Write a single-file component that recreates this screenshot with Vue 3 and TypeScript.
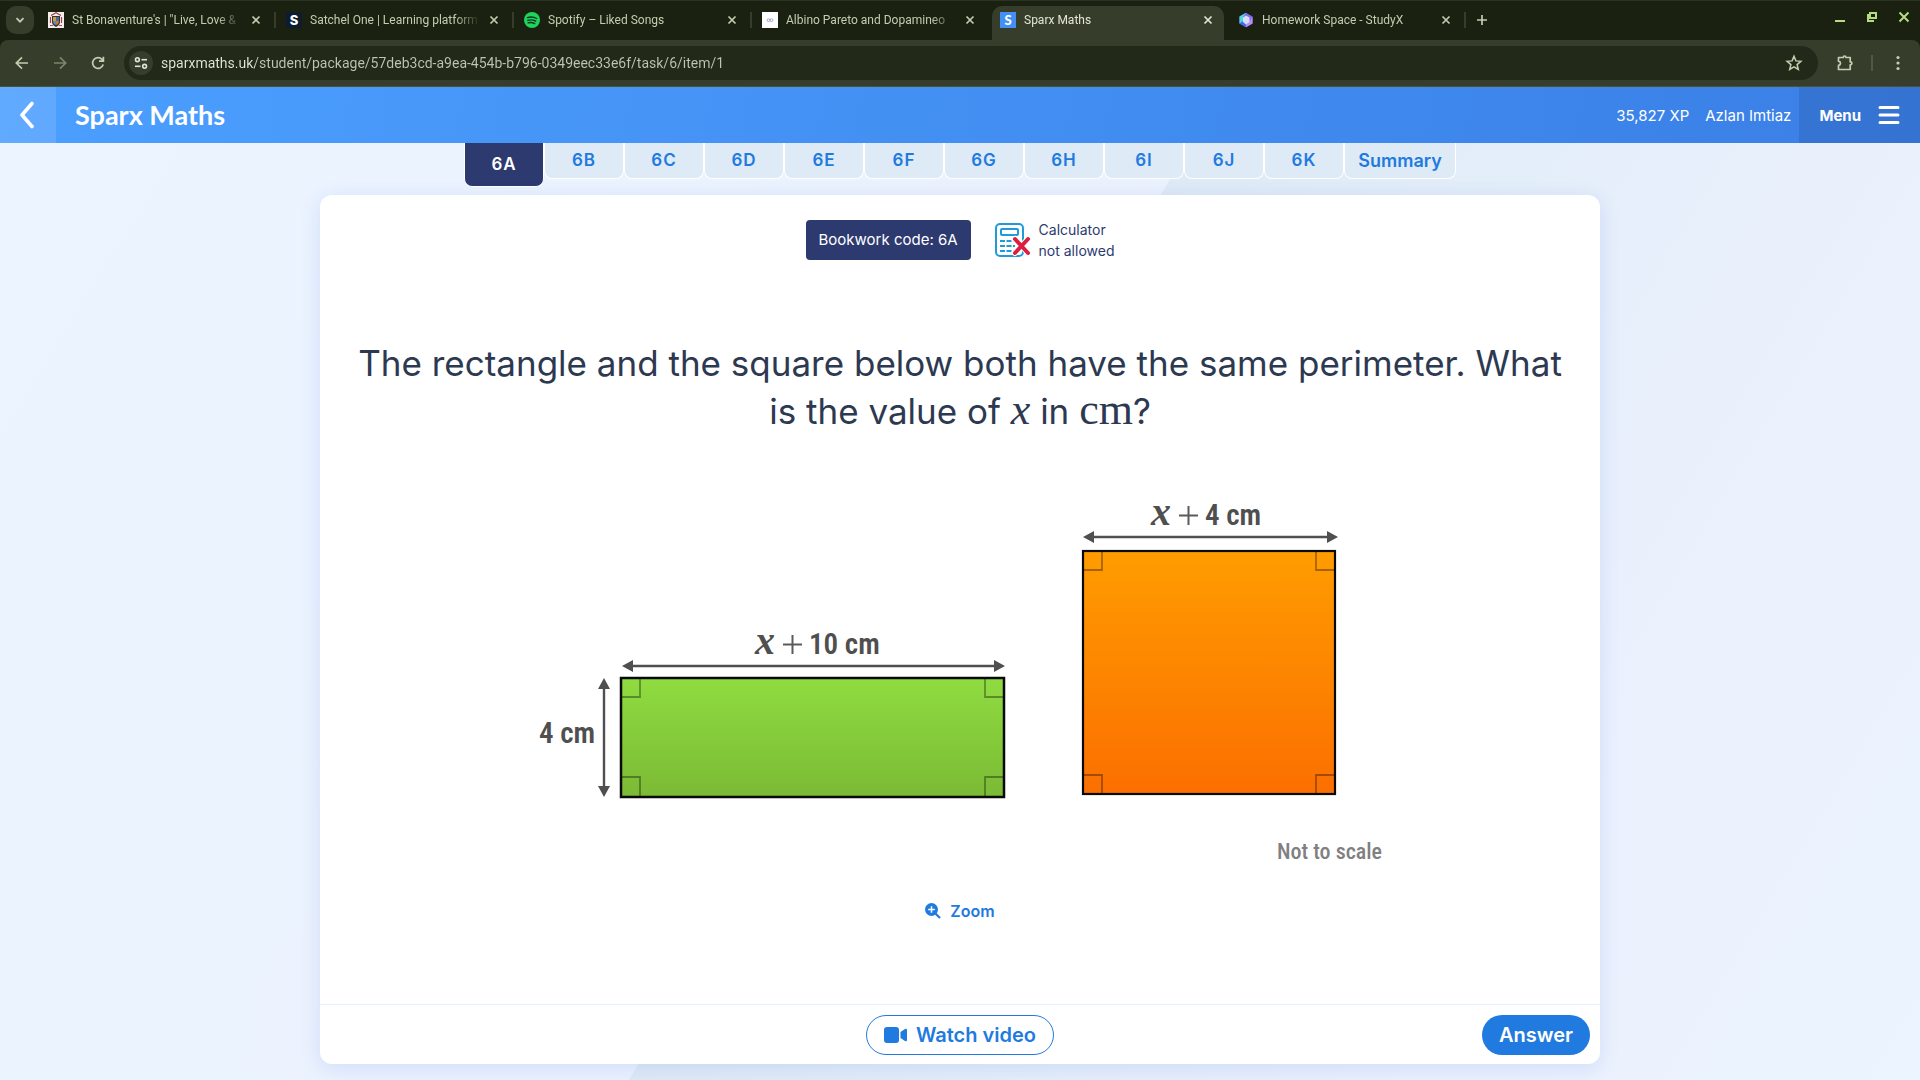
<script setup lang="ts">
interface BrowserTab {
  title: string
  icon: string
  active?: boolean
}

const browserTabs: BrowserTab[] = [
  { title: 'St Bonaventure\'s | "Live, Love &', icon: 'crest' },
  { title: 'Satchel One | Learning platform', icon: 'satchel' },
  { title: 'Spotify – Liked Songs', icon: 'spotify' },
  { title: 'Albino Pareto and Dopamineo', icon: 'page' },
  { title: 'Sparx Maths', icon: 'sparx', active: true },
  { title: 'Homework Space - StudyX', icon: 'studyx' },
]

const url = 'sparxmaths.uk/student/package/57deb3cd-a9ea-454b-b796-0349eec33e6f/task/6/item/1'

const taskItems = ['6A', '6B', '6C', '6D', '6E', '6F', '6G', '6H', '6I', '6J', '6K']
</script>

<template>
  <div class="window">
    <header class="chrome">
      <div class="tabstrip">
        <button class="tab-search" aria-label="Search tabs">
          <svg width="10" height="10" viewBox="0 0 10 10"><path d="M1.5 3.2 5 6.7l3.5-3.5" fill="none" stroke="currentColor" stroke-width="1.8" /></svg>
        </button>
        <div class="tabs">
          <div v-for="tab in browserTabs" :key="tab.title" class="tab" :class="{ active: tab.active }">
            <svg v-if="tab.icon === 'crest'" class="favicon" viewBox="0 0 16 16">
              <rect width="16" height="16" fill="#f4efec" />
              <path d="M3 3.5 8 .8l5 2.7M2.5 5v6M13.500 5v6" fill="none" stroke="#a33f45" stroke-width="1.200" />
              <path d="M4 4h8v6q0 3-4 5-4-2-4-5z" fill="#3c3434" />
              <path d="M5 5h3v4H5z" fill="#c8a13c" />
              <path d="M8 5h3v4H8z" fill="#4669a8" />
              <path d="M5 9h3v4Q5 12 5 9z" fill="#5c8bc0" />
              <path d="M8 9h3q0 3-3 4z" fill="#c87832" />
              <path d="M2 13.500h3M11 13.500h3" stroke="#b54a4a" />
            </svg>
            <svg v-else-if="tab.icon === 'satchel'" class="favicon" viewBox="0 0 16 16">
              <rect width="16" height="16" rx="3" fill="#0d1b33" />
              <text x="8" y="12.500" text-anchor="middle" font-family="Inter, sans-serif" font-weight="800" font-size="13" fill="#fff">S</text>
            </svg>
            <svg v-else-if="tab.icon === 'spotify'" class="favicon" viewBox="0 0 16 16">
              <circle cx="8" cy="8" r="8" fill="#1ed35e" />
              <path d="M3.400 5.600q5-1.400 9.300.9M3.800 8.300q4.200-1.200 7.900.9M4.200 10.800q3.500-.9 6.500.8" fill="none" stroke="#12351c" stroke-width="1.400" stroke-linecap="round" />
            </svg>
            <svg v-else-if="tab.icon === 'page'" class="favicon" viewBox="0 0 16 16">
              <rect width="16" height="16" fill="#fff" />
              <circle cx="6.500" cy="8.200" r="1.400" fill="none" stroke="#8d93b8" stroke-width=".8" />
              <circle cx="9.500" cy="8.200" r="1.400" fill="none" stroke="#8d93b8" stroke-width=".8" />
            </svg>
            <svg v-else-if="tab.icon === 'sparx'" class="favicon" viewBox="0 0 16 16">
              <rect width="16" height="16" fill="#4390f4" />
              <text x="8" y="12.500" text-anchor="middle" font-family="Lato, sans-serif" font-weight="900" font-size="13" fill="#fff">S</text>
            </svg>
            <svg v-else class="favicon" viewBox="0 0 16 16">
              <path d="M8 .8 14.500 4.400v7.200L8 15.200 1.500 11.600V4.400z" fill="#7c6cf0" />
              <path d="M8 .8 1.500 4.400v7.200L5 10V5z" fill="#4fd8d8" />
              <path d="M1.500 11.600 8 15.200V11L5 9z" fill="#3a6cf0" />
              <path d="M14.500 4.400v7.200L8 15.200V12l4-3z" fill="#b98cf5" />
              <path d="M5 5.500 8 3.500l3.500 2V10L8 12.500 5 10z" fill="#d9dcfb" />
            </svg>
            <span class="tab-title">{{ tab.title }}</span>
            <button class="tab-close" aria-label="Close tab">
              <svg width="10" height="10" viewBox="0 0 10 10"><path d="m1.500 1.500 7 7m0-7-7 7" stroke="currentColor" stroke-width="1.700" /></svg>
            </button>
          </div>
        </div>
        <button class="new-tab" aria-label="New tab">
          <svg width="12" height="12" viewBox="0 0 12 12"><path d="M6 1v10M1 6h10" stroke="currentColor" stroke-width="1.700" /></svg>
        </button>
        <div class="window-controls">
          <button aria-label="Minimise">
            <svg width="12" height="12" viewBox="0 0 12 12"><path d="M1 10h10" stroke="currentColor" stroke-width="2" /></svg>
          </button>
          <button aria-label="Restore">
            <svg width="12" height="12" viewBox="0 0 12 12"><path d="M4 2h6v5H4zM2 3v7h6" fill="none" stroke="currentColor" stroke-width="2" /></svg>
          </button>
          <button aria-label="Close">
            <svg width="12" height="12" viewBox="0 0 12 12"><path d="m1.500 1.500 9 9m0-9-9 9" stroke="currentColor" stroke-width="2" /></svg>
          </button>
        </div>
      </div>

      <div class="toolbar">
        <button class="nav-btn" aria-label="Back">
          <svg width="16" height="16" viewBox="0 0 16 16"><path d="M14 8H2.500M8 2.300 2.300 8 8 13.700" fill="none" stroke="currentColor" stroke-width="1.700" /></svg>
        </button>
        <button class="nav-btn dim" aria-label="Forward">
          <svg width="16" height="16" viewBox="0 0 16 16"><path d="M2 8h11.500M8 2.300 13.700 8 8 13.700" fill="none" stroke="currentColor" stroke-width="1.700" /></svg>
        </button>
        <button class="nav-btn" aria-label="Reload">
          <svg width="16" height="16" viewBox="0 0 16 16"><path d="M13.200 9.500A5.400 5.400 0 1 1 12 4.300l1.200 1.300M13.400 1.800v4.400H9" fill="none" stroke="currentColor" stroke-width="1.700" /></svg>
        </button>
        <div class="omnibox">
          <button class="site-info" aria-label="View site information">
            <svg width="14" height="14" viewBox="0 0 14 14" fill="none" stroke="currentColor" stroke-width="1.600">
              <circle cx="3.400" cy="3.700" r="1.900" /><path d="M7.500 3.700H13" /><circle cx="10.600" cy="10.300" r="1.900" /><path d="M1 10.300h5.500" />
            </svg>
          </button>
          <input class="url" type="text" aria-label="Address" :value="url" />
          <button class="star" aria-label="Bookmark this page">
            <svg width="18" height="18" viewBox="0 0 18 18"><path d="m9 2.200 1.900 4.700 5 .4-3.800 3.300 1.200 4.900L9 12.800l-4.300 2.700 1.200-4.900L2.100 7.300l5-.4z" fill="none" stroke="currentColor" stroke-width="1.500" /></svg>
          </button>
        </div>
        <button class="nav-btn puzzle" aria-label="Extensions">
          <svg width="18" height="18" viewBox="0 0 18 18"><path d="M1.500 3.500h4.800q0-1.500 1.300-1.500t1.300 1.500h4.300v4.300q1.700 0 1.700 1.500t-1.700 1.500v4.700H1.500v-4.100q2-.4 2-2.100t-2-2.100z" fill="none" stroke="currentColor" stroke-width="1.700" stroke-linejoin="round" /></svg>
        </button>
        <span class="divider"></span>
        <button class="nav-btn kebab" aria-label="Browser menu">
          <svg width="16" height="16" viewBox="0 0 16 16" fill="currentColor"><circle cx="8" cy="2.500" r="1.600" /><circle cx="8" cy="8" r="1.600" /><circle cx="8" cy="13.500" r="1.600" /></svg>
        </button>
      </div>
    </header>

    <nav class="app-bar">
      <button class="back" aria-label="Back to tasks">
        <svg width="18" height="28" viewBox="0 0 18 28"><path d="M13 2.500 3 14l10 11.500" fill="none" stroke="#fff" stroke-width="3.600" stroke-linecap="round" stroke-linejoin="round" /></svg>
      </button>
      <a class="brand" href="#">Sparx Maths</a>
      <span class="xp">35,827 XP</span>
      <span class="user">Azlan Imtiaz</span>
      <button class="menu">
        Menu
        <svg width="22" height="20" viewBox="0 0 22 20"><path d="M2 2.500h18M2 10h18M2 17.500h18" stroke="#fff" stroke-width="3" stroke-linecap="round" /></svg>
      </button>
    </nav>

    <main class="page">
      <div class="task-tabs">
        <button v-for="(item, i) in taskItems" :key="item" class="task-tab" :class="{ current: i === 0 }">{{ item }}</button>
        <button class="task-tab summary">Summary</button>
      </div>

      <section class="card">
        <div class="info-row">
          <div class="bookwork">Bookwork code: 6A</div>
          <div class="calculator">
            <svg width="36" height="36" viewBox="0 0 36 36" fill="none">
              <rect x="1" y="2" width="27" height="32" rx="4" stroke="#1f9bd7" stroke-width="2" />
              <rect x="6" y="7" width="17" height="6" rx="1" stroke="#1f9bd7" stroke-width="2" />
              <path d="M5 19h18M5 24h15M5 29h18" stroke="#1f9bd7" stroke-width="2" stroke-dasharray="5 1.500" />
              <path d="m20 17 13 14M33 17 20 31" stroke="#fff" stroke-width="6" stroke-linecap="round" />
              <path d="m20 17 13 14M33 17 20 31" stroke="#dc1f3e" stroke-width="4" stroke-linecap="round" />
            </svg>
            <p>Calculator<br />not allowed</p>
          </div>
        </div>

        <h1 class="question">
          The rectangle and the square below both have the same perimeter. What is the value of
          <i class="math">x</i> in <span class="math">cm</span>?
        </h1>

        <svg class="figure" viewBox="0 0 880 384" role="img" aria-label="Rectangle and square with side lengths">
          <defs>
            <linearGradient id="green" x1="0" y1="0" x2="0" y2="1">
              <stop offset="0" stop-color="#8fdc40" />
              <stop offset="1" stop-color="#7bba35" />
            </linearGradient>
            <linearGradient id="orange" x1="0" y1="0" x2="0" y2="1">
              <stop offset="0" stop-color="#ff9c00" />
              <stop offset="1" stop-color="#fb6f00" />
            </linearGradient>
          </defs>

          <rect x="101" y="188" width="383" height="119" fill="url(#green)" stroke="#0a0a0a" stroke-width="2.500" />
          <path d="M102 207h18v-18M483 207h-18v-18M102 287h18v19M483 287h-18v19" fill="none" stroke="#000" stroke-opacity=".35" stroke-width="1.800" />
          <path d="M110 176h366M84 197v101" stroke="#4f4f4f" stroke-width="2.400" />
          <path d="m102 176 11-6v12zM485 176l-11-6v12zM84 188l-6 11h12zM84 307l-6-11h12z" fill="#4f4f4f" />

          <rect x="563" y="61" width="252" height="243" fill="url(#orange)" stroke="#0a0a0a" stroke-width="2.200" />
          <path d="M564 80h18V62M814 80h-18V62M564 285h18v18M814 285h-18v18" fill="none" stroke="#000" stroke-opacity=".35" stroke-width="1.800" />
          <path d="M570 47h240" stroke="#4f4f4f" stroke-width="2.400" />
          <path d="m563 47 11-6v12zM818 47l-11-6v12z" fill="#4f4f4f" />

          <g class="labels">
            <text class="var" x="235" y="164">x</text>
            <path d="M263 154.500h19M272.500 145v19" />
            <text x="289" y="164">10 cm</text>
            <text x="19" y="253">4 cm</text>
            <text class="var" x="631" y="35">x</text>
            <path d="M659 25.500h19M668.500 16v19" />
            <text x="685" y="35">4 cm</text>
            <text class="scale" x="757" y="369">Not to scale</text>
          </g>
        </svg>

        <button class="zoom">
          <svg width="16" height="16" viewBox="0 0 16 16"><circle cx="6.500" cy="6.500" r="6.500" fill="currentColor" /><path d="m10.500 10.500 4.500 4.500" stroke="currentColor" stroke-width="2.200" /><path d="M6.500 3.200v6.600M3.200 6.500h6.600" stroke="#fff" stroke-width="1.500" /></svg>
          Zoom
        </button>

        <footer class="actions">
          <button class="watch">
            <svg width="23" height="16" viewBox="0 0 23 16" fill="currentColor"><rect width="15" height="16" rx="3" /><path d="M16.500 5 21 2q2-1 2 1v10q0 2-2 1l-4.500-3z" /></svg>
            Watch video
          </button>
          <button class="answer">Answer</button>
        </footer>
      </section>
    </main>
  </div>
</template>

<style>
body {
  margin: 0;
}
</style>

<style scoped>
.window {
  display: flex;
  flex-direction: column;
  min-height: 100vh;
  font-family: Inter, "Open Sans", sans-serif;
  color: #2d3950;
}

button {
  display: flex;
  align-items: center;
  justify-content: center;
  margin: 0;
  padding: 0;
  border: 0;
  background: none;
  color: inherit;
  font: inherit;
  cursor: pointer;
}

.chrome {
  font-family: Roboto, sans-serif;
  background: #1a2110;
  color: #c3cdb0;
}

.tabstrip {
  display: flex;
  height: 40px;
  box-sizing: border-box;
  border-top: 1px solid #2b3323;
}

.tab-search {
  width: 28px;
  height: 28px;
  margin: 5px 6px 0;
  border-radius: 10px;
  background: #363e2b;
}

.tabs {
  display: flex;
}

.tab {
  position: relative;
  display: flex;
  align-items: center;
  width: 238px;
  height: 34px;
  margin-top: 5px;
  padding: 0 14px 6px 8px;
  box-sizing: border-box;
  font-size: 12px;
}

.tab::after {
  content: "";
  position: absolute;
  right: 2px;
  top: 6px;
  width: 2px;
  height: 16px;
  background: #363e2b;
}

.tab.active::after,
.tab:has(+ .active)::after {
  content: none;
}

.tab.active {
  color: #e1e6d4;
}

.tab.active::before {
  content: "";
  position: absolute;
  inset: 0 6px 0 0;
  border-radius: 10px 10px 0 0;
  background: #363e2b;
}

.favicon {
  position: relative;
  flex: none;
  width: 16px;
  height: 16px;
}

.tab-title {
  position: relative;
  flex: 1;
  min-width: 0;
  margin: 0 8px;
  overflow: hidden;
  white-space: nowrap;
  mask-image: linear-gradient(90deg, #000 145px, transparent 170px);
}

.tab-close {
  position: relative;
  width: 16px;
  height: 16px;
}

.new-tab {
  width: 28px;
  height: 28px;
  margin: 5px 0 0;
}

.window-controls {
  display: flex;
  gap: 20px;
  height: 32px;
  margin-left: auto;
  padding-right: 10px;
  color: #b5dc83;
}

.toolbar {
  display: flex;
  align-items: center;
  height: 47px;
  box-sizing: border-box;
  padding: 0 8px 1px;
  border-bottom: 1px solid #4a5238;
  border-radius: 8px 8px 0 0;
  background: #363e2b;
}

.nav-btn {
  flex: none;
  width: 28px;
  height: 28px;
  margin-right: 10px;
}

.dim {
  color: #7b856b;
}

.omnibox {
  display: flex;
  flex: 1;
  align-items: center;
  height: 34px;
  margin-left: 2px;
  padding: 0 15px 0 5px;
  box-sizing: border-box;
  border-radius: 17px;
  background: #222918;
}

.site-info {
  flex: none;
  width: 24px;
  height: 24px;
  border-radius: 12px;
  background: #363e2b;
  color: #dfe5d2;
}

.url {
  flex: 1;
  min-width: 0;
  padding: 0;
  margin-left: 8px;
  border: 0;
  outline: 0;
  font: 14px/24px Roboto, sans-serif;
  color: transparent;
  background: linear-gradient(90deg, #e4e8da 94px, #bfc5b2 94px) text;
}

.puzzle {
  margin: 0 0 0 14px;
}

.divider {
  width: 2px;
  height: 16px;
  margin: 0 11px;
  background: #505a41;
}

.kebab {
  margin: 0;
}

.app-bar {
  display: flex;
  align-items: center;
  height: 56px;
  background: linear-gradient(100deg, #4b9fff, #3a7fe6);
  color: #fff;
  font-size: 15px;
}

.back {
  width: 56px;
  height: 56px;
  background: rgb(255 255 255 / 12%);
}

.brand {
  margin-left: 19px;
  margin-right: auto;
  font: 700 27px/36px Lato, sans-serif;
  color: #fff;
  text-decoration: none;
}

.xp {
  margin-right: 16px;
}

.user {
  margin-right: 8px;
}

.menu {
  gap: 17px;
  height: 56px;
  padding: 0 20px;
  background: rgb(35 75 140 / 22%);
  font-weight: 700;
}

.page {
  display: flex;
  flex: 1;
  flex-direction: column;
  align-items: center;
  padding: 0 24px 16px;
  background: linear-gradient(121deg, #ebf4ff 0%, #ebf2fe 48%, #deeaf6 48%, #e4eefa 62%, #ebf1fd 80%, #ebf4ff 100%);
}

.task-tabs {
  display: flex;
  align-items: flex-start;
  height: 52px;
}

.task-tab {
  width: 80px;
  height: 36px;
  padding-bottom: 1px;
  box-sizing: border-box;
  border: 1px solid #fff;
  border-top: 0;
  border-radius: 0 0 8px 8px;
  background: #deeaf6;
  color: #217adf;
  font-size: 17px;
  font-weight: 600;
  letter-spacing: 1px;
}

.task-tab.current {
  height: 44px;
  background: #2d3a70;
  color: #fff;
}

.task-tab.summary {
  width: 112px;
  font-size: 18px;
  letter-spacing: 0;
}

.card {
  display: flex;
  flex: 1;
  flex-direction: column;
  align-items: center;
  width: 100%;
  max-width: 1280px;
  border-radius: 12px;
  background: #fff;
  box-shadow: 0 4px 20px rgb(50 90 210 / 14%);
}

.info-row {
  display: flex;
  align-items: center;
  gap: 24px;
  margin-top: 24px;
}

.bookwork {
  padding: 0 13px;
  border-radius: 4px;
  background: #2d3a70;
  color: #fff;
  font-size: 15px;
  line-height: 40px;
}

.calculator {
  display: flex;
  align-items: center;
  gap: 8px;
  color: #2d3a70;
  font-size: 14px;
  line-height: 21px;
}

.calculator p {
  margin: 0;
}

.question {
  max-width: 1232px;
  margin: 78px 24px 0;
  font-size: 35px;
  font-weight: 400;
  line-height: 48px;
  text-align: center;
}

.math {
  font-family: "Liberation Serif", serif;
  font-size: 44px;
  line-height: 40px;
}

.figure {
  width: 100%;
  max-width: 880px;
  margin-top: 55px;
}

.labels {
  fill: #4f4f4f;
  font: 600 29px "Roboto Condensed", sans-serif;
}

.labels path {
  fill: none;
  stroke: #5a5a5a;
  stroke-width: 2;
}

.labels .var {
  font: italic 700 40px "Liberation Serif", serif;
}

.labels .scale {
  fill: #808080;
  font-size: 22px;
  font-weight: 500;
}

.zoom {
  gap: 9px;
  height: 40px;
  margin-top: 17px;
  color: #217adf;
  font-size: 16px;
  font-weight: 600;
}

.actions {
  display: grid;
  grid-template-columns: 1fr auto 1fr;
  align-items: center;
  width: 100%;
  height: 60px;
  margin-top: auto;
  padding: 0 10px;
  box-sizing: border-box;
  border-top: 1px solid #e8f0fd;
  font-size: 20px;
  font-weight: 600;
}

.watch {
  grid-column: 2;
  gap: 9px;
  height: 40px;
  padding: 0 17px;
  border: 1px solid #217adf;
  border-radius: 20px;
  color: #217adf;
}

.answer {
  justify-self: end;
  height: 40px;
  padding: 0 17px;
  border-radius: 20px;
  background: #217adf;
  color: #fff;
}
</style>
